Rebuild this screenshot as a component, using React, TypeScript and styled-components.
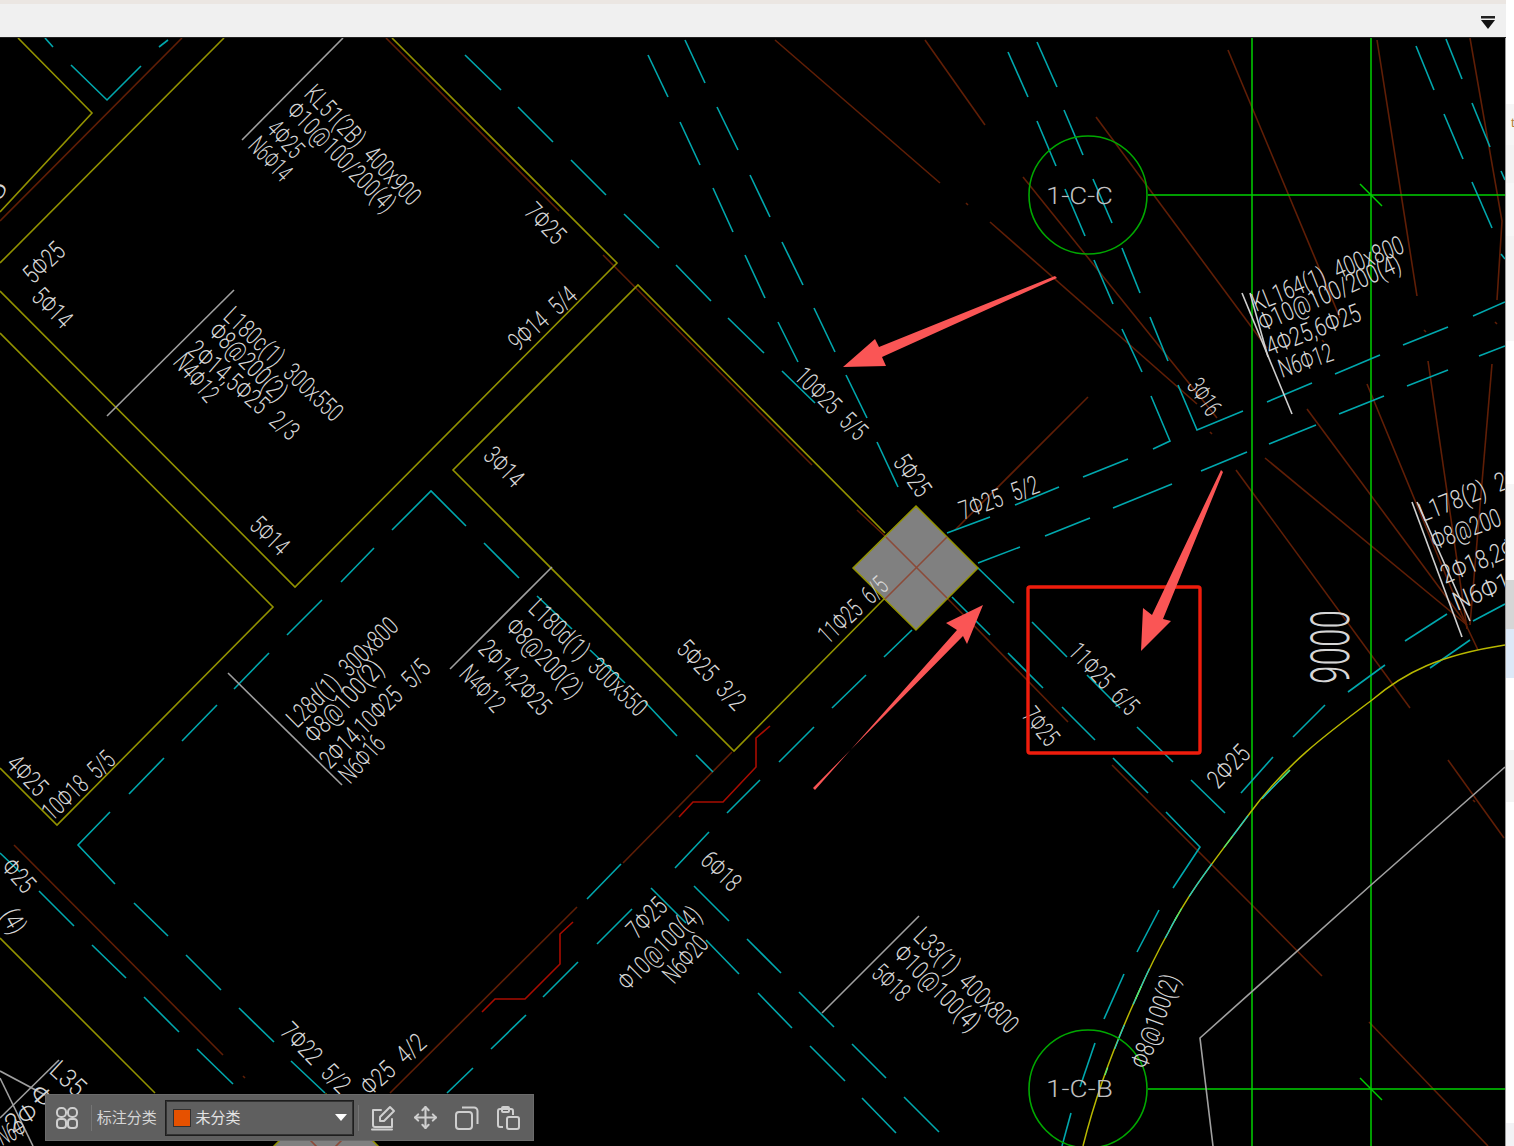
import React from "react";
import styled, { createGlobalStyle } from "styled-components";
import { Move } from "lucide-react";

const GlobalStyle = createGlobalStyle`
  html, body { margin: 0; padding: 0; background: #fff; overflow: hidden; }
  #root { width: 1514px; height: 1146px; }
`;

const Page = styled.div`
  position: relative;
  display: flex;
  width: 1514px;
  height: 1146px;
  overflow: hidden;
  font-family: "Noto Sans CJK SC", "Liberation Sans", sans-serif;
`;
const Main = styled.div`
  display: flex;
  flex-direction: column;
  width: 1506px;
  height: 100%;
`;
const TopBar = styled.header`
  display: flex;
  align-items: center;
  justify-content: flex-end;
  height: 38px;
  box-sizing: border-box;
  padding: 4px 11px 0 0;
  background: #f0f0f0;
  border-top: 4px solid #ebe6e2;
  border-bottom: 1px solid #222;
`;
const Canvas = styled.main`
  position: relative;
  flex: 1;
  background: #000;
  border-right: 1px solid #9a9a9a;
  overflow: hidden;
`;
const Drawing = styled.svg`
  display: block;
  width: 1505px;
  height: 1108px;
`;
const Gutter = styled.aside`
  display: flex;
  flex-direction: column;
  width: 8px;
  height: 100%;
  overflow: hidden;
`;
const Band = styled.div<{ $h: number; $bg: string }>`
  flex: none;
  height: ${(p) => p.$h}px;
  background: ${(p) => p.$bg};
`;
const GutterMark = styled.span`
  display: block;
  padding: 11px 0 0 5px;
  font: 13px "Liberation Sans", sans-serif;
  color: #b5803a;
`;

const tones: Record<string, string> = {
  cyan: "#00a8ae",
  olive: "#929200",
  brown: "#601e06",
  red: "#a80c00",
  gray: "#a0a0a0",
  pale: "#d0d0d0",
  green: "#00d000",
  ring: "#00a800",
  cross: "#8c4a38",
  yellow: "#b8b800",
  lime: "#50e870",
  aqua: "#20c8c8",
};

const Stroke = styled.polyline<{ $tone: string; $w?: number }>`
  fill: none;
  stroke: ${(p) => tones[p.$tone]};
  stroke-width: ${(p) => p.$w ?? 1.6};
  stroke-linejoin: miter;
`;
const Curve = styled.path<{ $tone: string; $w?: number; $dash?: string }>`
  fill: none;
  stroke: ${(p) => tones[p.$tone]};
  stroke-width: ${(p) => p.$w ?? 1.5};
  stroke-dasharray: ${(p) => p.$dash ?? "none"};
`;
const Ring = styled.circle`
  fill: none;
  stroke: ${tones.ring};
  stroke-width: 1.6;
`;
const Column = styled.polygon`
  fill: #808080;
  stroke: ${tones.olive};
  stroke-width: 1.5;
`;
const Arrow = styled.polygon`
  fill: #fa5555;
`;
const Box = styled.rect`
  fill: none;
  stroke: #f01c0c;
  stroke-width: 3.4;
`;
const Note = styled.text<{ $fill?: string }>`
  font-family: Roboto, "Liberation Sans", sans-serif;
  font-weight: 300;
  text-rendering: geometricPrecision;
  word-spacing: 0.3em;
  fill: ${(p) => p.$fill ?? "#d6d6d6"};
  white-space: pre;
`;

type L = number[];
const cyan: L[] = [
  [45,38,53,47],[71,65,107,100,141,66],[168,40,159,47],[465,55,501,90],[518,107,553,142],[571,160,606,195],[624,214,659,248],[676,265,711,301],[728,318,764,353],[782,371,815,403],
  [648,55,668,97],[680,122,700,165],[713,188,733,232],[745,255,765,298],[778,322,798,362],
  [685,40,705,83],[717,107,738,150],[750,175,770,217],[782,242,803,285],[814,308,835,352],[846,375,867,418],[877,442,898,487],
  [1008,52,1028,97],[1037,42,1057,87],[1037,121,1056,166],[1064,110,1083,155],[1065,189,1085,236],[1093,179,1112,223],[1094,260,1113,304],[1122,248,1140,293],[1122,329,1142,372],[1150,317,1168,361],
  [1151,396,1170,441,1153,449],[1178,385,1197,430,1243,411],
  [1416,46,1434,90],[1446,39,1462,79],[1444,114,1463,159],[1472,103,1490,147],[1472,182,1492,228],[1501,171,1505,180],[1501,254,1505,259],
  [1267,402,1312,383],[1335,374,1380,355],[1403,345,1448,327],[1473,316,1505,302],
  [1201,471,1247,452],[1269,444,1316,425],[1339,414,1384,396],[1407,386,1448,370],[1479,356,1505,346],
  [1083,477,1128,459],[1015,505,1059,487],[947,533,990,517],
  [978,563,1020,547],[1045,536,1090,518],[1113,508,1172,484],
  [1405,641,1447,614],[1473,621,1505,604],[1430,668,1470,640],
  [978,568,1014,603],[1032,622,1067,657],[1087,675,1120,708],[1137,727,1173,762],
  [952,597,990,635],[1008,653,1043,688],[1062,707,1095,740],[1113,758,1148,793],[1166,812,1200,847,1173,888],[1191,780,1225,813],
  [1159,910,1137,952],[1124,974,1104,1019],[1095,1043,1080,1087],[1071,1113,1062,1146],
  [1241,793,1273,757],[1293,737,1325,705],[1348,692,1385,665],
  [912,630,884,657],[866,675,832,708],[814,727,779,762],[760,780,727,813],[709,832,675,868],[621,864,587,899],[632,909,597,944],[578,962,543,997],[526,1015,491,1049],[473,1068,447,1093],
  [374,548,341,582],[322,600,287,635],[269,653,234,689],[217,705,182,741],[164,758,129,794],[110,812,78,845,115,884],[134,903,168,936],[186,955,221,990],[239,1008,274,1042],[291,1061,325,1093],
  [0,853,20,872],[39,891,74,926],[92,945,126,978],[144,997,179,1032],[197,1049,233,1084],
  [484,543,519,578],[392,530,431,491,466,526],[537,596,572,629],[590,650,625,683],[645,702,677,736],[696,755,713,772],
  [694,886,729,921],[747,939,781,973],[799,992,834,1027],[852,1044,886,1078],[904,1097,939,1132],
  [651,888,686,923],[706,940,739,974],[758,993,792,1028],[810,1046,845,1081],[862,1098,896,1133],
];
const olive: L[] = [
  [18,38,92,113,0,212],[224,38,0,263],[0,291,295,587,617,263,392,38],[0,333,273,607,57,825,0,768],[0,938,155,1093],
  [885,533,638,285,453,470,734,751,885,598],
];
const brown: L[] = [
  [182,38,0,221],[386,38,559,211],[603,255,812,465],[857,510,886,537],[947,598,1068,722],[1112,765,1250,903,1322,976],[1369,1022,1488,1146],
  [1088,397,955,530],[732,752,623,863],[577,907,390,1093],[14,845,223,1055],[243,1076,245,1078],
  [775,40,940,183],[990,222,1197,404],[925,40,985,125],[1023,177,1217,418],[1096,117,1267,348],[1228,50,1340,318],[1377,40,1417,296],[1470,38,1502,221,1497,300],
  [1428,361,1467,629],[1492,364,1470,625],[1367,384,1468,629,1478,650],[1307,409,1467,625],[1265,458,1467,625],[1236,470,1410,708],[1448,760,1504,838],
  [966,203,968,205],[1210,432,1212,434],[1322,340,1324,342],[1424,330,1426,332],[1495,322,1497,324],[1473,800,1475,802],
];
const red: L[] = [
  [770,726,756,738,756,767,723,802,693,802,679,817],
  [573,922,560,934,560,964,525,999,495,999,482,1012],
];
const gray: L[] = [
  [343,38,242,140],[234,290,107,416],[552,567,450,669],[228,673,342,785],[59,1060,0,1118],[0,1071,45,1095],[0,1078,33,1146],
  [919,916,822,1013],[1505,767,1371,885,1200,1038,1213,1146],
];
const pale: L[] = [[1242,293,1292,414],[1250,293,1268,357],[1412,502,1462,637],[1417,502,1470,621]];
const green: L[] = [
  [1252,38,1252,1146],[1371,38,1371,1146],[1148,195,1505,195],[1148,1089,1505,1089],[1360,184,1382,206],[1360,1078,1382,1100],
];

type Txt = [string, number, number, number, number];
const notes: Txt[] = [
  ["KL51(2B) 400x900", 303,95,410,207],
  ["Φ10@100/200(4)", 285,112,385,214],
  ["4Φ25", 265,130,293,160],
  ["N6Φ14", 247,147,281,183],
  ["7Φ25", 523,213,555,246],
  ["5Φ25", 33,285,67,253],
  ["5Φ14", 30,298,62,330],
  ["9Φ14 5/4", 518,352,579,298],
  ["L180c(1) 300x550", 222,318,333,423],
  ["Φ8@200(2)", 207,333,277,403],
  ["2Φ14,5Φ25 2/3", 186,352,290,442],
  ["N4Φ12", 172,363,207,404],
  ["3Φ14", 482,457,513,489],
  ["5Φ14", 248,527,279,557],
  ["10Φ25 5/5", 793,378,857,442],
  ["5Φ25", 892,462,918,499],
  ["7Φ25 5/2", 963,520,1041,492],
  ["11Φ25 6/5", 828,645,890,588],
  ["11Φ25 6/5", 1067,653,1128,717],
  ["7Φ25", 1021,716,1047,748],
  ["2Φ25", 1218,790,1252,755],
  ["3Φ16", 1186,386,1208,418],
  ["5Φ25 3/2", 675,650,735,712],
  ["L180d(1) 300x550", 527,610,637,718],
  ["Φ8@200(2)", 504,628,572,700],
  ["2Φ14,2Φ25", 477,650,540,717],
  ["N4Φ12", 458,675,494,714],
  ["L28d(1) 300x800", 297,729,400,628],
  ["Φ8@100(2)", 315,745,385,670],
  ["2Φ14,10Φ25 5/5", 330,770,432,670],
  ["N6Φ16", 350,785,387,745],
  ["4Φ25", 5,765,37,798],
  ["10Φ18 5/5", 52,822,117,762],
  ["Φ25", 0,868,24,895],
  ["(4)", 0,915,12,936],
  ["6Φ18", 699,862,731,893],
  ["7Φ25", 637,940,669,908],
  ["Φ10@100(4)", 628,992,703,917],
  ["N6Φ20", 674,985,710,945],
  ["L33(1) 400x800", 912,938,1008,1035],
  ["Φ10@100(4)", 892,955,970,1033],
  ["5Φ18", 870,975,900,1003],
  ["7Φ22 5/2", 279,1033,340,1095],
  ["Φ25 4/2", 370,1097,428,1045],
  ["Φ8@100(2)", 1147,1070,1180,978],
  ["KL164(1) 400x800", 1256,312,1406,252],
  ["Φ10@100/200(4)", 1263,332,1403,270],
  ["4Φ25,6Φ25", 1270,356,1363,320],
  ["N6Φ12", 1282,378,1335,360],
  ["L178(2) 22", 1423,522,1520,484],
  ["Φ8@200", 1435,550,1503,525],
  ["2Φ18,2Φ25", 1445,584,1540,545],
  ["N6Φ12", 1457,611,1525,584],
  ["L35", 48,1072,76,1098],
  ["Φ", 28,1094,42,1110],
  ["2Φ", 12,1134,40,1116],
  ["N6Φ", 2,1146,28,1134],
  ["5", 0,203,8,186],
];

function Beam({ text, x1, y1, x2, y2, size = 26 }: { text: string; x1: number; y1: number; x2: number; y2: number; size?: number }) {
  const angle = (Math.atan2(y2 - y1, x2 - x1) * 180) / Math.PI;
  const len = Math.hypot(x2 - x1, y2 - y1);
  return (
    <Note transform={`translate(${x1} ${y1}) rotate(${angle.toFixed(2)})`} fontSize={size} textLength={len} lengthAdjust="spacingAndGlyphs">
      {text}
    </Note>
  );
}

const Lines = ({ data, tone, w }: { data: L[]; tone: string; w?: number }) => (
  <>
    {data.map((p, i) => (
      <Stroke key={i} $tone={tone} $w={w} points={p.join(" ")} />
    ))}
  </>
);

const Toolbar = styled.div`
  position: absolute;
  left: 45px;
  top: 1056px;
  width: 489px;
  height: 47px;
  box-sizing: border-box;
  display: flex;
  align-items: center;
  padding: 0 11px 0 8px;
  background: #5f5f5f;
  border: 1px solid #6b6b6b;
`;
const ToolIcon = styled.button<{ $gap?: number }>`
  display: flex;
  align-items: center;
  justify-content: center;
  width: 26px;
  height: 26px;
  padding: 0;
  margin-left: ${(p) => p.$gap ?? 0}px;
  background: none;
  border: 0;
  color: #cfcfcf;
`;
const Divider = styled.span<{ $l: number }>`
  width: 1px;
  height: 26px;
  margin-left: ${(p) => p.$l}px;
  background: #757575;
`;
const Caption = styled.span`
  margin-left: 5px;
  padding-bottom: 3px;
  width: 61px;
  font-size: 15px;
  color: #d6d6d6;
  white-space: nowrap;
`;
const Select = styled.div`
  display: flex;
  align-items: center;
  width: 190px;
  height: 36px;
  margin-left: 8px;
  padding: 0 5px 0 7px;
  box-sizing: border-box;
  background: #5f5f5f;
  border: 1px solid #1e1e1e;
  box-shadow: inset 0 0 0 1px #333;
`;
const Swatch = styled.span`
  width: 18px;
  height: 18px;
  box-sizing: border-box;
  background: #e65100;
  border: 1px solid #303030;
`;
const SelectText = styled.span`
  flex: 1;
  margin-left: 4px;
  padding-bottom: 3px;
  font-size: 15px;
  color: #e4e4e4;
`;
const Caret = styled.span`
  width: 0;
  height: 0;
  margin-right: 1px;
  border-left: 6px solid transparent;
  border-right: 6px solid transparent;
  border-top: 7px solid #fff;
`;

const arc = "M1505 645 C1440 655 1405 672 1372 700 C1325 735 1285 765 1250 813 C1215 860 1190 890 1168 933 C1150 965 1142 985 1132 1007 C1115 1045 1097 1090 1083 1146";
const arcMid = "M1290 770 C1275 785 1262 798 1250 813 C1215 860 1190 890 1168 933 C1150 965 1142 985 1132 1007 C1122 1030 1114 1050 1105 1075";

export default function App() {
  return (
    <Page>
      <GlobalStyle />
      <Main>
        <TopBar>
          <svg width="14" height="14" viewBox="0 0 14 14">
            <rect x="0" y="0" width="14" height="2.5" fill="#222" />
            <polygon points="0,4 14,4 7,13" fill="#111" />
          </svg>
        </TopBar>
        <Canvas>
          <Drawing viewBox="0 38 1505 1108">
            <Lines data={brown} tone="brown" />
            <Lines data={green} tone="green" w={1.5} />
            <Lines data={cyan} tone="cyan" />
            <Lines data={olive} tone="olive" />
            <Lines data={red} tone="red" w={1.6} />
            <Lines data={gray} tone="gray" />
            <Lines data={pale} tone="pale" />
            <Curve $tone="yellow" d={arc} />
            <Curve $tone="aqua" $w={1.3} $dash="40 22 26 34" d={arcMid} />
            <Curve $tone="lime" $w={1.3} $dash="14 74" d={arcMid} />
            <Ring cx={1088} cy={195} r={59} />
            <Ring cx={1088} cy={1089} r={59} />
            <Column points="916,506 978,568 916,630 853,568" />
            <Lines data={[[886,537,947,598],[947,537,885,599]]} tone="cross" />
            <Column points="326,1094 388,1156 326,1218 264,1156" />
            <Lines data={[[295,1125,357,1187],[357,1125,295,1187]]} tone="cross" />
            {notes.map(([t, x1, y1, x2, y2], i) => (
              <Beam key={i} text={t} x1={x1} y1={y1} x2={x2} y2={y2} />
            ))}
            <Note x={1349} y={684} fontSize={54} transform="rotate(-90 1349 684)" textLength={74} lengthAdjust="spacingAndGlyphs">9000</Note>
            <Note $fill="#c0c0c0" x={1046} y={204} fontSize={24} textLength={67} lengthAdjust="spacingAndGlyphs">1-C-C</Note>
            <Note $fill="#c0c0c0" x={1046} y={1097} fontSize={24} textLength={67} lengthAdjust="spacingAndGlyphs">1-C-B</Note>
            <Box x={1028} y={587} width={172} height={166} rx={2} />
            <Arrow points="1057,278 882,357 886,366 843,367 875,339 879,347 1055,276" />
            <Arrow points="1223,472 1163,619 1171,621 1141,651 1143,608 1152,615 1221,470" />
            <Arrow points="815,790 957,630 946,623 983,605 967,644 963,636 813,788" />
          </Drawing>
          <Toolbar>
            <ToolIcon>
              <svg width="24" height="24" viewBox="0 0 24 24" fill="none" stroke="currentColor" strokeWidth="2">
                <rect x="2" y="2" width="9" height="9" rx="4" />
                <rect x="13" y="2" width="9" height="9" rx="4" />
                <rect x="2" y="13" width="9" height="9" rx="3" />
                <rect x="13" y="13" width="9" height="9" rx="3" />
              </svg>
            </ToolIcon>
            <Divider $l={11} />
            <Caption>标注分类</Caption>
            <Select>
              <Swatch />
              <SelectText>未分类</SelectText>
              <Caret />
            </Select>
            <Divider $l={4} />
            <ToolIcon $gap={11}>
              <svg width="26" height="26" viewBox="0 0 26 26" fill="none" stroke="currentColor" strokeWidth="2" strokeLinecap="round" strokeLinejoin="round">
                <path d="M11 5H3v15a2 2 0 0 0 2 2h17v-8" />
                <path d="M2 24.500h20" />
                <path d="M10 12l10-10 4 4-10 10H10z" />
              </svg>
            </ToolIcon>
            <ToolIcon $gap={16}>
              <Move size={25} strokeWidth={2} />
            </ToolIcon>
            <ToolIcon $gap={16}>
              <svg width="26" height="26" viewBox="0 0 26 26" fill="none" stroke="currentColor" strokeWidth="2">
                <rect x="2" y="7" width="16" height="17" rx="3" />
                <path d="M8 2.500h12a3.500 3.500 0 0 1 3.500 3.500v13" />
              </svg>
            </ToolIcon>
            <ToolIcon $gap={16}>
              <svg width="26" height="26" viewBox="0 0 26 26" fill="none" stroke="currentColor" strokeWidth="2">
                <path d="M7 22H4a2 2 0 0 1-2-2V6a2 2 0 0 1 2-2h11a2 2 0 0 1 2 2v4" />
                <rect x="6" y="2" width="7" height="5" rx="1" />
                <rect x="11" y="12" width="12" height="12" rx="2" />
              </svg>
            </ToolIcon>
          </Toolbar>
        </Canvas>
      </Main>
      <Gutter>
        <Band $h={104} $bg="#ffffff" />
        <Band $h={41} $bg="#f6f6f6"><GutterMark>t</GutterMark></Band>
        <Band $h={38} $bg="#f3f3f3" />
        <Band $h={53} $bg="#f7f7f7" />
        <Band $h={54} $bg="#f3f3f3" />
        <Band $h={51} $bg="#f7f7f7" />
        <Band $h={143} $bg="#ffffff" />
        <Band $h={96} $bg="#f6f6f6" />
        <Band $h={49} $bg="#d6d6d6" />
        <Band $h={49} $bg="#dde9f8" />
        <Band $h={72} $bg="#ffffff" />
        <Band $h={52} $bg="#f4f4f4" />
        <Band $h={321} $bg="#ffffff" />
        <Band $h={23} $bg="#f2f2f5" />
      </Gutter>
    </Page>
  );
}
